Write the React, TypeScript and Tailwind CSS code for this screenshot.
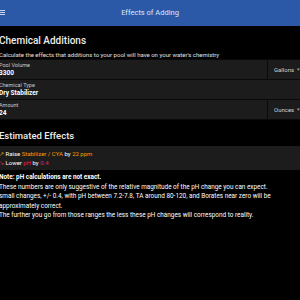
import React from "react";

const font = { fontFamily: "Roboto, 'Liberation Sans', sans-serif" };

function Row({ label, value, unit }: { label: string; value: string; unit?: string }) {
  return (
    <div className="flex h-[20px] bg-[#1c1c1c] border-b border-[#0a0a0a]">
      <div className="flex-1 flex flex-col justify-center -ml-[1px]">
        <div className="text-[5.5px] leading-[7px] text-[#c8c8c8]">{label}</div>
        <div className="text-[6.5px] leading-[8px] font-bold text-white">{value}</div>
      </div>
      {unit && (
        <div className="w-[33px] border-l border-[#0a0a0a] flex items-center pl-[6px] text-[6px] text-[#d0d0d0] overflow-hidden whitespace-nowrap">
          {unit}
          <span className="ml-[3px] text-[5px] text-[#9a9a9a]">▾</span>
        </div>
      )}
    </div>
  );
}

export default function App() {
  return (
    <div className="w-[300px] h-[300px] bg-black overflow-hidden text-white" style={font}>
      <div className="h-[26px] bg-[#2b59a8] relative flex items-center justify-center">
        <div className="absolute left-0 top-[10px] w-[5px] flex flex-col gap-[1px]">
          <div className="h-[1px] bg-[#c9d6ee]" />
          <div className="h-[1px] bg-[#c9d6ee]" />
          <div className="h-[1px] bg-[#c9d6ee]" />
        </div>
        <div className="text-[7.5px] text-[#dfe7f5]">Effects of Adding</div>
      </div>
      <div className="pt-[8px]">
        <div className="text-[10px] leading-[13px] font-medium text-[#ececec] -ml-[1px]">Chemical Additions</div>
        <div className="text-[6px] leading-[8px] mt-[4px] text-[#e0e0e0] -ml-[1px]">
          Calculate the effects that additions to your pool will have on your water's chemistry
        </div>
        <div className="mt-[0px] border-t border-[#0a0a0a]">
          <Row label="Pool Volume" value="3300" unit="Gallons" />
          <Row label="Chemical Type" value="Dry Stabilizer" />
          <Row label="Amount" value="24" unit="Ounces" />
        </div>
        <div className="text-[9.5px] leading-[12px] font-medium text-[#ececec] mt-[10px] -ml-[1px]">Estimated Effects</div>
        <div className="mt-[4px] bg-[#1c1c1c] py-[3px] text-[6px] leading-[9px] -ml-[1px]">
          <div>
            <span className="text-[#ff9800]">↗</span> Raise <span className="text-[#ff9800]">Stabilizer / CYA</span> by{" "}
            <span className="text-[#ff9800]">22 ppm</span>
          </div>
          <div>
            <span className="text-[#e91e63]">↘</span> Lower <span className="text-[#e91e63]">pH</span> by{" "}
            <span className="text-[#e91e63]">0.4</span>
          </div>
        </div>
        <div className="text-[6.4px] leading-[9.5px] mt-[3px] -ml-[1px]">
          <div className="font-bold">Note: pH calculations are not exact.</div>
          <div>These numbers are only suggestive of the relative magnitude of the pH change you can expect.</div>
          <div>
            small changes, +/- 0.4, with pH between 7.2-7.8, TA around 80-120, and Borates near zero will be approximately correct.
          </div>
          <div>The further you go from those ranges the less these pH changes will correspond to reality.</div>
        </div>
      </div>
    </div>
  );
}
